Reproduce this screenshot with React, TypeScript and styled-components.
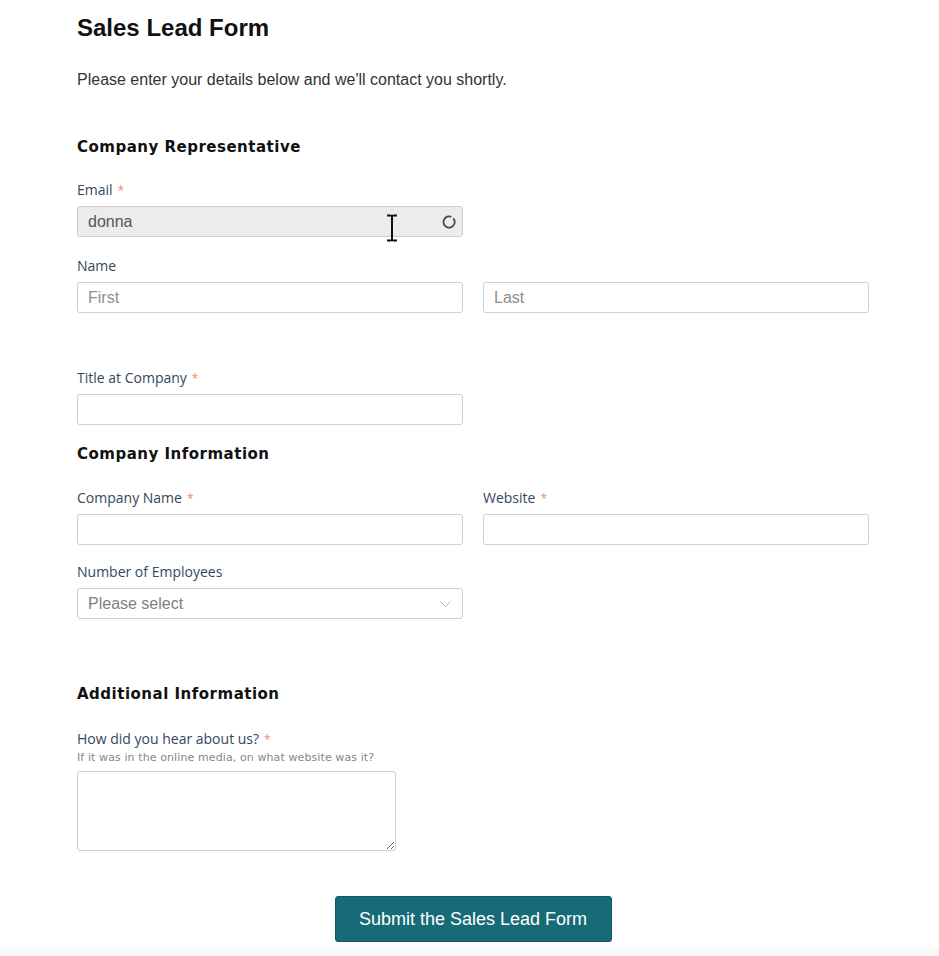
import React from "react";
import styled, { createGlobalStyle } from "styled-components";

const GlobalStyle = createGlobalStyle`
  html, body { margin: 0; padding: 0; background: #ffffff; }
  body { font-family: "Liberation Sans", Arial, sans-serif; color: #222; }
  * { box-sizing: border-box; }
`;

const Page = styled.div`
  min-height: 956px;
  display: flex;
  flex-direction: column;
`;

const Form = styled.form`
  width: 792px;
  margin-left: 77px;
  padding-top: 13px;
  display: flex;
  flex-direction: column;
`;

const Title = styled.h1`
  margin: 0;
  font-family: "Liberation Sans", Arial, sans-serif;
  font-size: 24px;
  line-height: 29px;
  font-weight: 700;
  color: #111;
`;

const Intro = styled.p`
  margin: 28px 0 0;
  font-family: "Liberation Sans", Arial, sans-serif;
  font-size: 16px;
  line-height: 20px;
  color: #333;
`;

const SectionHeading = styled.h3<{ $mt: number }>`
  margin: ${(p) => p.$mt}px 0 0;
  font-family: "DejaVu Sans", Verdana, sans-serif;
  font-size: 15px;
  line-height: 20px;
  font-weight: 700;
  letter-spacing: 0.5px;
  color: #111;
`;

const Row = styled.div<{ $mt: number }>`
  margin-top: ${(p) => p.$mt}px;
  display: grid;
  grid-template-columns: 386px 386px;
  column-gap: 20px;
`;

const Field = styled.div`
  display: flex;
  flex-direction: column;
`;

const Label = styled.label`
  display: block;
  height: 20px;
  font-family: "Open Sans", "Segoe UI", sans-serif;
  font-size: 14px;
  line-height: 20px;
  color: #33475b;
  margin-bottom: 6px;
`;

const Required = styled.span`
  color: #f08a6c;
  margin-left: 5px;
  font-size: 12px;
  line-height: 1;
`;

const Help = styled.span`
  font-family: "DejaVu Sans", Verdana, sans-serif;
  font-size: 11px;
  line-height: 14px;
  letter-spacing: 0.1px;
  color: #8a8580;
  margin: -4px 0 6px;
`;

const InputWrap = styled.div`
  position: relative;
  display: flex;
`;

const TextInput = styled.input<{ $loading?: boolean }>`
  width: 100%;
  height: 31px;
  border: 1px solid #cfcfcf;
  border-radius: 3px;
  padding: 0 10px;
  font-family: "Liberation Sans", Arial, sans-serif;
  font-size: 16px;
  color: #555;
  background: ${(p) => (p.$loading ? "#ececec" : "#ffffff")};
  outline: none;
  &::placeholder { color: #8e8e8e; }
`;

const Select = styled.select`
  width: 100%;
  height: 31px;
  border: 1px solid #cfcfcf;
  border-radius: 3px;
  padding: 0 10px;
  font-family: "Liberation Sans", Arial, sans-serif;
  font-size: 16px;
  color: #808080;
  background: #fff;
  appearance: none;
  outline: none;
`;

const Chevron = styled.svg`
  position: absolute;
  right: 12px;
  top: 13px;
  pointer-events: none;
`;

const Spinner = styled.svg`
  position: absolute;
  right: 7px;
  top: 9px;
`;

const Cursor = styled.svg`
  position: absolute;
  left: 309px;
  top: 8px;
  pointer-events: none;
`;

const TextArea = styled.textarea`
  width: 319px;
  height: 80px;
  border: 1px solid #cfcfcf;
  border-radius: 3px;
  padding: 6px 10px;
  font-family: "Liberation Sans", Arial, sans-serif;
  font-size: 16px;
  background: #fff;
  outline: none;
  resize: both;
`;

const Actions = styled.div`
  margin-top: 45px;
  display: flex;
  justify-content: center;
`;

const SubmitButton = styled.button`
  width: 277px;
  height: 46px;
  background: #176b77;
  border: 1px solid #0f5862;
  border-radius: 3px;
  color: #fff;
  font-family: "Liberation Sans", Arial, sans-serif;
  font-size: 18px;
  cursor: pointer;
`;

const Footer = styled.div`
  margin-top: 6px;
  flex: 1;
  background: #f9f9f9;
`;

const Req = () => <Required>*</Required>;

export default function App() {
  return (
    <>
      <GlobalStyle />
      <Page>
        <Form onSubmit={(e) => e.preventDefault()}>
          <Title>Sales Lead Form</Title>
          <Intro>Please enter your details below and we'll contact you shortly.</Intro>

          <SectionHeading $mt={47}>Company Representative</SectionHeading>

          <Row $mt={23}>
            <Field>
              <Label>
                Email<Req />
              </Label>
              <InputWrap>
                <TextInput $loading defaultValue="donna" />
                <Spinner width="14" height="14" viewBox="0 0 14 14">
                  <path
                    d="M11.8 4 A5.6 5.6 0 1 1 8.6 1.6"
                    fill="none"
                    stroke="#4a4a4a"
                    strokeWidth="1.8"
                    strokeLinecap="round"
                  />
                </Spinner>
                <Cursor width="12" height="28" viewBox="0 0 12 28">
                  <path
                    d="M1 1.5 H4.5 Q6 1.5 6 3 V25 Q6 26.5 4.5 26.5 H1 M11 1.5 H7.5 Q6 1.5 6 3 M6 25 Q6 26.5 7.5 26.5 H11"
                    fill="none"
                    stroke="#111"
                    strokeWidth="2"
                  />
                </Cursor>
              </InputWrap>
            </Field>
          </Row>

          <Row $mt={19}>
            <Field>
              <Label>Name</Label>
              <TextInput placeholder="First" />
            </Field>
            <Field>
              <Label>&nbsp;</Label>
              <TextInput placeholder="Last" />
            </Field>
          </Row>

          <Row $mt={55}>
            <Field>
              <Label>
                Title at Company<Req />
              </Label>
              <TextInput />
            </Field>
          </Row>

          <SectionHeading $mt={19}>Company Information</SectionHeading>

          <Row $mt={24}>
            <Field>
              <Label>
                Company Name<Req />
              </Label>
              <TextInput />
            </Field>
            <Field>
              <Label>
                Website<Req />
              </Label>
              <TextInput />
            </Field>
          </Row>

          <Row $mt={17}>
            <Field>
              <Label>Number of Employees</Label>
              <InputWrap>
                <Select defaultValue="">
                  <option value="" disabled>
                    Please select
                  </option>
                  <option>1-10</option>
                  <option>11-50</option>
                  <option>51-200</option>
                  <option>201+</option>
                </Select>
                <Chevron width="11" height="6" viewBox="0 0 11 6">
                  <path d="M0.5 0.5 L5.5 5.5 L10.5 0.5" fill="none" stroke="#b5b5b5" strokeWidth="1" />
                </Chevron>
              </InputWrap>
            </Field>
          </Row>

          <SectionHeading $mt={65}>Additional Information</SectionHeading>

          <Row $mt={25}>
            <Field>
              <Label>
                How did you hear about us?<Req />
              </Label>
              <Help>If it was in the online media, on what website was it?</Help>
              <TextArea />
            </Field>
          </Row>

          <Actions>
            <SubmitButton type="submit">Submit the Sales Lead Form</SubmitButton>
          </Actions>
        </Form>
        <Footer />
      </Page>
    </>
  );
}
